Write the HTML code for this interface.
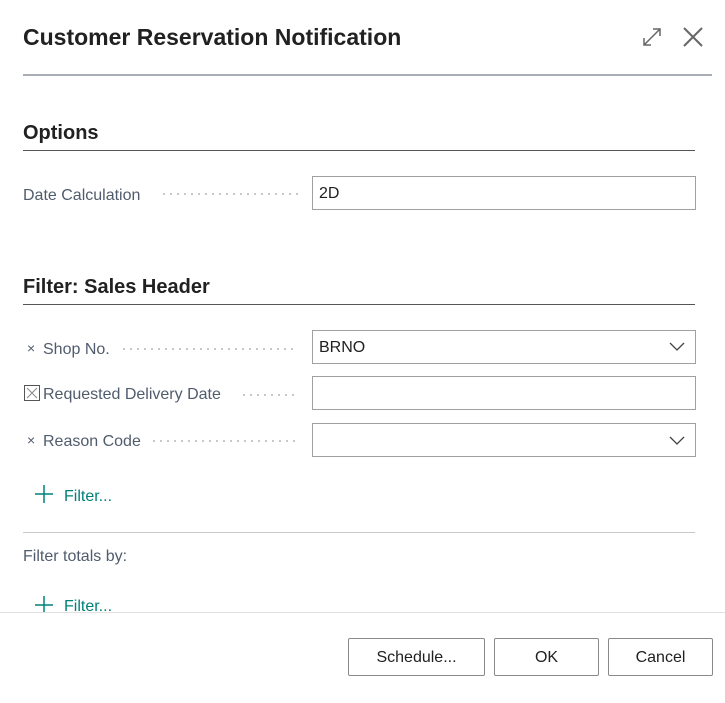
<!DOCTYPE html><html><head><style>
body{margin:0;width:725px;height:699px;background:#fff;font-family:"Liberation Sans",sans-serif;position:relative;overflow:hidden;color:#212121}
.a{position:absolute}
.lbl{font-size:16px;color:#505c6d}
.dots{position:absolute;height:2px;background:repeating-linear-gradient(90deg,#c8c8c8 0 2px,transparent 2px 7px)}
.inp{position:absolute;left:312px;border:1px solid #a0a0a0;font-size:16px;line-height:32px;padding-left:6px;box-sizing:border-box;width:384px;height:34px}
.btn{position:absolute;top:638px;height:38px;border:1px solid #8a8a8a;border-radius:2px;box-sizing:border-box;font-size:16px;text-align:center;line-height:38px;color:#212121}
.flt{font-size:16px;color:#00807a}
</style></head><body>
<div class="a" style="left:23px;top:24px;font-size:23px;font-weight:bold;color:#212121">Customer Reservation Notification</div>
<svg class="a" style="left:640px;top:24px" width="70" height="26"><path d="M4 21L20 5M13 5H20V12M4 14V21H11" stroke="#666" stroke-width="1.5" fill="none"/><path d="M44 4L62 22M62 4L44 22" stroke="#666" stroke-width="2" fill="none"/></svg>
<div class="a" style="left:23px;top:74px;width:689px;height:2px;background:#a9adb5"></div>
<div class="a" style="left:23px;top:122px;font-size:20px;font-weight:bold">Options</div>
<div class="a" style="left:23px;top:150px;width:672px;height:1px;background:#555"></div>
<div class="a lbl" style="left:23px;top:187px">Date Calculation</div>
<div class="dots" style="left:163px;top:193px;width:135px"></div>
<div class="inp" style="top:176px;line-height:34px">2D</div>
<div class="a" style="left:23px;top:276px;font-size:20px;font-weight:bold">Filter: Sales Header</div>
<div class="a" style="left:23px;top:304px;width:672px;height:1px;background:#555"></div>
<div class="a lbl" style="left:27px;top:340px;font-size:14px">×</div>
<div class="a lbl" style="left:43px;top:341px">Shop No.</div>
<div class="dots" style="left:123px;top:348px;width:175px"></div>
<div class="inp" style="top:330px;line-height:34px">BRNO</div>
<svg class="a" style="left:668px;top:340px" width="18" height="12"><path d="M2 3L9 10L16 3" stroke="#444" stroke-width="1.3" fill="none"/></svg>
<svg class="a" style="left:24px;top:385px" width="17" height="17"><rect x=".5" y=".5" width="15" height="15" fill="none" stroke="#555"/><path d="M3 3L13 13M13 3L3 13" stroke="#888"/></svg>
<div class="a lbl" style="left:43px;top:386px">Requested Delivery Date</div>
<div class="dots" style="left:243px;top:394px;width:55px"></div>
<div class="inp" style="top:376px"></div>
<div class="a lbl" style="left:27px;top:432px;font-size:14px">×</div>
<div class="a lbl" style="left:43px;top:433px">Reason Code</div>
<div class="dots" style="left:153px;top:440px;width:145px"></div>
<div class="inp" style="top:423px"></div>
<svg class="a" style="left:668px;top:434px" width="18" height="12"><path d="M2 3L9 10L16 3" stroke="#444" stroke-width="1.3" fill="none"/></svg>
<svg class="a" style="left:34px;top:484px" width="20" height="20"><path d="M10 1V19M1 10H19" stroke="#00807a" stroke-width="1.5"/></svg>
<div class="a flt" style="left:64px;top:488px">Filter...</div>
<div class="a" style="left:23px;top:532px;width:672px;height:1px;background:#c8c8c8"></div>
<div class="a lbl" style="left:23px;top:548px">Filter totals by:</div>
<svg class="a" style="left:34px;top:595px" width="20" height="20"><path d="M10 1V19M1 10H19" stroke="#00807a" stroke-width="1.5"/></svg>
<div class="a flt" style="left:64px;top:598px">Filter...</div>
<div class="a" style="left:0;top:612px;width:725px;height:90px;background:#fff;border-top:1px solid #e0e0e0"></div>
<div class="btn" style="left:348px;width:137px">Schedule...</div>
<div class="btn" style="left:494px;width:105px">OK</div>
<div class="btn" style="left:608px;width:105px">Cancel</div>
</body></html>
